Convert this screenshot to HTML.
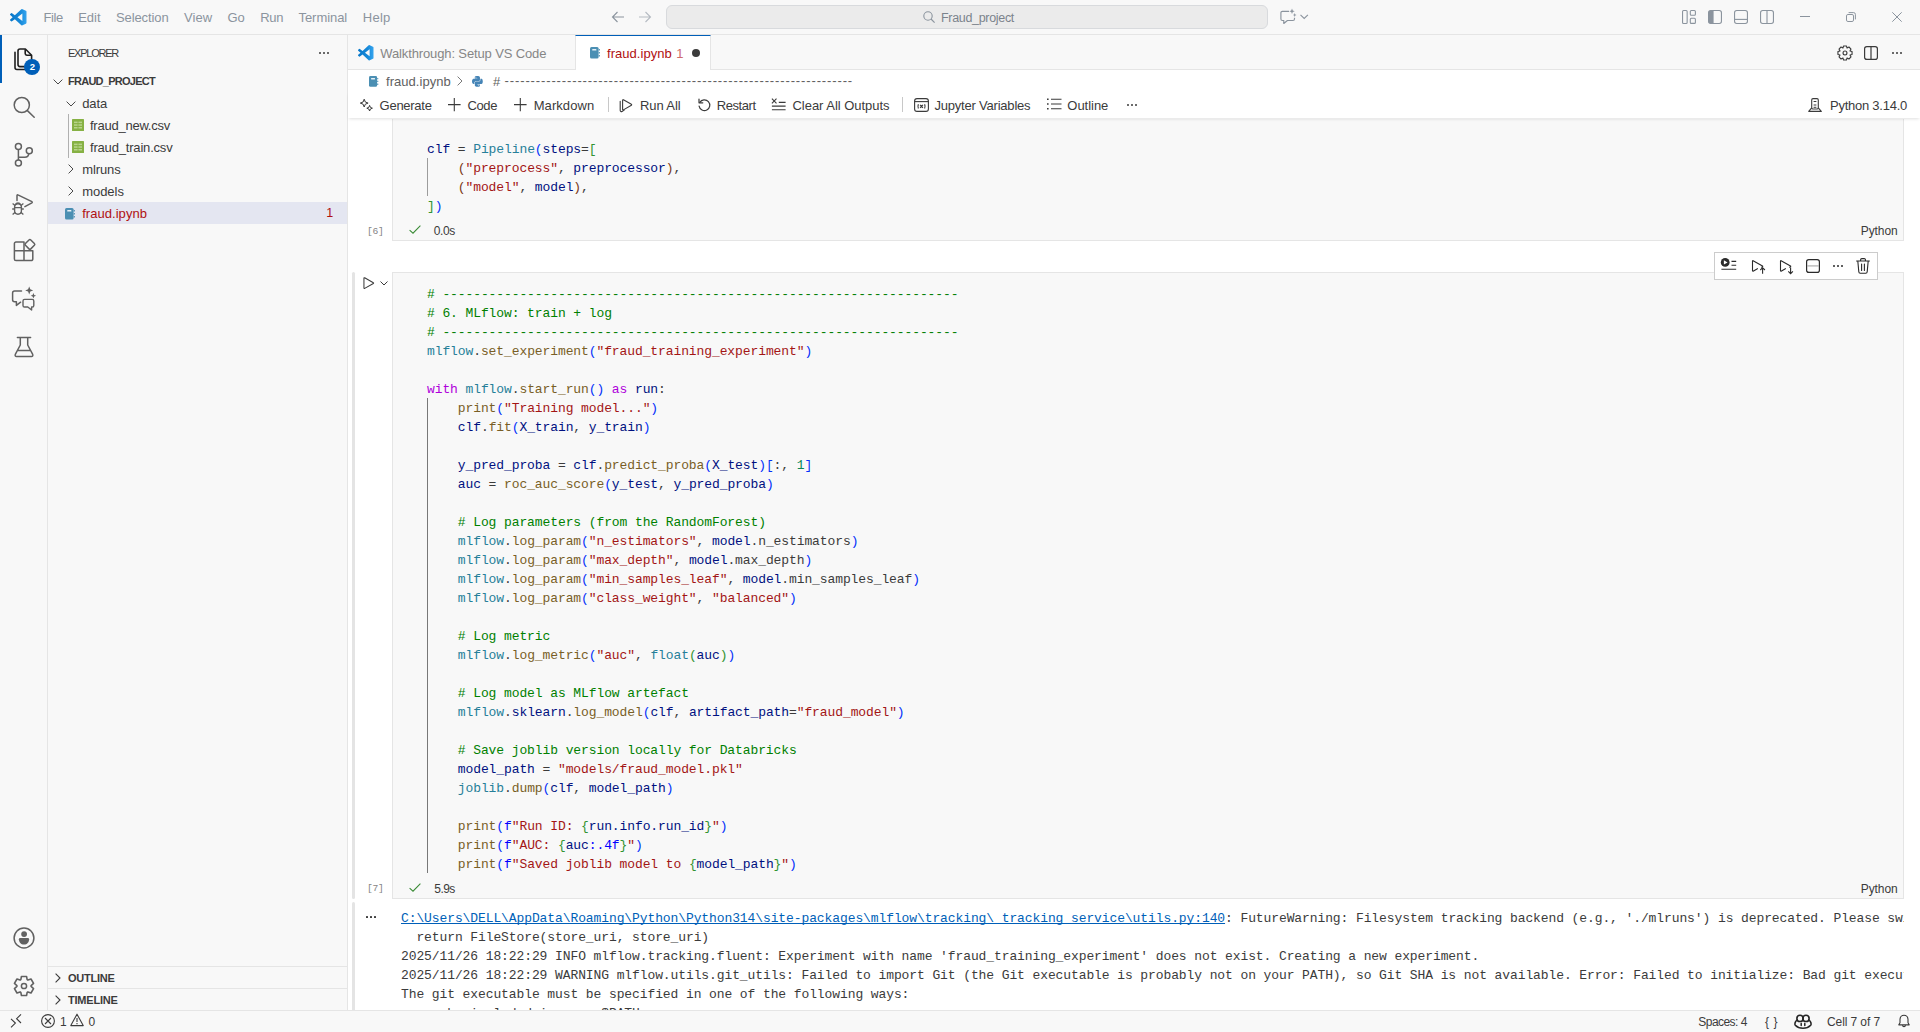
<!DOCTYPE html>
<html>
<head>
<meta charset="utf-8">
<title>fraud.ipynb - Fraud_project - Visual Studio Code</title>
<style>
*{box-sizing:border-box;margin:0;padding:0}
html,body{width:1920px;height:1032px;overflow:hidden;background:#f8f8f8}
body{font-family:"Liberation Sans",sans-serif;font-size:13px;color:#3b3b3b;position:relative}
.abs{position:absolute}
.t{position:absolute;white-space:pre;line-height:1}
svg{position:absolute;overflow:visible}
/* title bar */
#titlebar{left:0;top:0;width:1920px;height:35px;background:#f8f8f8;border-bottom:1px solid #e5e5e5}
.menu{color:#8b949e;font-size:12.4px;top:11px}
#cmd{left:666px;top:6px;width:602px;height:23px;background:#ececec;border:1px solid #d9d9d9;border-radius:6px}
/* activity bar */
#activity{left:0;top:35px;width:48px;height:975px;background:#f8f8f8;border-right:1px solid #e5e5e5}
/* sidebar */
#sidebar{left:48px;top:35px;width:300px;height:975px;background:#f8f8f8;border-right:1px solid #e5e5e5}
.row{font-size:12.4px;color:#3b3b3b}
/* editor */
#tabs{left:348px;top:35px;width:1572px;height:35px;background:#f8f8f8;border-bottom:1px solid #e5e5e5}
#tab2{left:575px;top:35px;width:136px;height:35px;background:#fff;border-top:1px solid #005fb8;border-left:1px solid #e5e5e5;border-right:1px solid #e5e5e5}
#editor{left:348px;top:70px;width:1572px;height:940px;background:#fff}
#nbtoolbar{left:348px;top:92px;width:1572px;height:26px;background:#fff;box-shadow:0 2px 3px -1px rgba(0,0,0,.13)}
.tb{font-size:12.4px;color:#3b3b3b;top:99px}
.cell{background:#f8f8f8;border:1px solid #e5e5e5}
.code{position:absolute;white-space:pre;font-family:"Liberation Mono",monospace;font-size:13px;letter-spacing:-0.1px;line-height:19px;color:#3b3b3b}
.out{position:absolute;white-space:pre;font-family:"Liberation Mono",monospace;font-size:13px;letter-spacing:-0.1px;line-height:19px;color:#3b3b3b}
.c{color:#008000}.s{color:#a31515}.k{color:#af00db}.f{color:#795e26}.v{color:#001080}.m{color:#267f99}.n{color:#098658}.b1{color:#0431fa}.b2{color:#319331}.kw{color:#0000ff}.b3{color:#7b3814}.lk{color:#005fb8;text-decoration:underline;text-decoration-skip-ink:none}
/* status bar */
#status{left:0;top:1010px;width:1920px;height:22px;background:#f8f8f8;border-top:1px solid #e5e5e5}
.st{font-size:11.6px;color:#3b3b3b;top:1016px}
</style>
</head>
<body>
<div id="titlebar" class="abs"></div>
<div id="activity" class="abs"></div>
<div id="sidebar" class="abs"></div>
<div id="tabs" class="abs"></div>
<div id="tab2" class="abs"></div>
<div id="editor" class="abs"></div>
<div id="status" class="abs"></div>
<svg style="left:10px;top:9px;" width="16.5" height="16.5" viewBox="0 0 24 24"><defs><linearGradient id="g1" x1="0" x2="1" y1="0" y2="0"><stop offset="0" stop-color="#0877c9"/><stop offset="0.6" stop-color="#1588d8"/><stop offset="1" stop-color="#35a4ee"/></linearGradient></defs><path fill="url(#g1)" d="M23.15 2.587L18.21.21a1.494 1.494 0 0 0-1.705.29l-9.46 8.63-4.12-3.128a.999.999 0 0 0-1.276.057L.327 7.261A1 1 0 0 0 .326 8.74L3.899 12 .326 15.26a1 1 0 0 0 .001 1.479L1.65 17.94a.999.999 0 0 0 1.276.057l4.12-3.128 9.46 8.63a1.492 1.492 0 0 0 1.704.29l4.942-2.377A1.5 1.5 0 0 0 24 20.06V3.939a1.5 1.5 0 0 0-.85-1.352zm-5.146 14.861L10.826 12l7.178-5.448v10.896z"/></svg>
<div class="t" style="left:43.5px;top:11.00px;font-size:13px;color:#8b949e;letter-spacing:-0.412px;">File</div>
<div class="t" style="left:78.2px;top:11.00px;font-size:13px;color:#8b949e;letter-spacing:-0.025px;">Edit</div>
<div class="t" style="left:116.0px;top:11.00px;font-size:13px;color:#8b949e;letter-spacing:-0.109px;">Selection</div>
<div class="t" style="left:184.0px;top:11.00px;font-size:13px;color:#8b949e;letter-spacing:0.039px;">View</div>
<div class="t" style="left:227.5px;top:11.00px;font-size:13px;color:#8b949e;letter-spacing:-0.021px;">Go</div>
<div class="t" style="left:260.2px;top:11.00px;font-size:13px;color:#8b949e;letter-spacing:-0.283px;">Run</div>
<div class="t" style="left:298.5px;top:11.00px;font-size:13px;color:#8b949e;letter-spacing:-0.053px;">Terminal</div>
<div class="t" style="left:362.8px;top:11.00px;font-size:13px;color:#8b949e;letter-spacing:0.241px;">Help</div>
<svg style="left:611px;top:10px;" width="14" height="14" viewBox="0 0 14 14"><path d="M13 7H1.5M6.5 2L1.5 7l5 5" fill="none" stroke="#8b949e" stroke-width="1.1"/></svg>
<svg style="left:638px;top:10px;" width="14" height="14" viewBox="0 0 14 14"><path d="M1 7h11.5M7.5 2l5 5-5 5" fill="none" stroke="#b5bbc2" stroke-width="1.1"/></svg>
<div class="abs" style="left:666px;top:5px;width:602px;height:24px;background:#ebebeb;border:1px solid #d8dadd;border-radius:6px;"></div>
<svg style="left:922px;top:10px;" width="14" height="14" viewBox="0 0 14 14"><circle cx="6" cy="6" r="4.2" fill="none" stroke="#8b949e" stroke-width="1.1"/><path d="M9 9l3.6 3.6" stroke="#8b949e" stroke-width="1.1"/></svg>
<div class="t" style="left:941.0px;top:12.12px;font-size:12.5px;color:#7b838c;letter-spacing:-0.317px;">Fraud_project</div>
<svg style="left:1280px;top:9px;" width="18" height="16" viewBox="0 0 18 16"><path d="M9 2.300H2.400a1.500 1.500 0 0 0-1.500 1.500V10a1.500 1.500 0 0 0 1.500 1.500H3.800V14.500L7.400 11.500H13a1.500 1.500 0 0 0 1.500-1.500V8.800" fill="none" stroke="#8b949e" stroke-width="1.150" stroke-linejoin="round"/><path d="M12 -0.40000000000000036L12.756 1.5439999999999996L14.7 2.3L12.756 3.056L12 5.0L11.244 3.056L9.3 2.3L11.244 1.5439999999999996z" fill="#8b949e"/><path d="M14.7 4.1L15.232 5.468L16.599999999999998 6L15.232 6.532L14.7 7.9L14.168 6.532L12.799999999999999 6L14.168 5.468z" fill="#8b949e"/></svg>
<svg style="left:1300.3px;top:14.1px;" width="9" height="6" viewBox="0 0 9 6"><path d="M0.500 0.800l3.700 3.700L7.900 0.800" fill="none" stroke="#8b949e" stroke-width="1.1"/></svg>
<svg style="left:1682px;top:10px;" width="14" height="14" viewBox="0 0 14 14"><rect x="0.55" y="0.55" width="4.6" height="12.9" rx="1" fill="none" stroke="#8b949e" stroke-width="1.1"/><rect x="8.3" y="0.55" width="5.1" height="4.7" rx="1" fill="none" stroke="#8b949e" stroke-width="1.1"/><rect x="8.3" y="8.3" width="5.1" height="5.1" rx="1" fill="none" stroke="#8b949e" stroke-width="1.1"/></svg>
<svg style="left:1708px;top:10px;" width="14" height="14" viewBox="0 0 14 14"><rect x="0.55" y="0.55" width="12.9" height="12.9" rx="2.2" fill="none" stroke="#8b949e" stroke-width="1.1"/><path d="M0.55 2.5a2 2 0 0 1 2-2H5.6v13H2.5a2 2 0 0 1-2-2z" fill="#8b949e"/></svg>
<svg style="left:1734px;top:10px;" width="14" height="14" viewBox="0 0 14 14"><rect x="0.55" y="0.55" width="12.9" height="12.9" rx="2.2" fill="none" stroke="#8b949e" stroke-width="1.1"/><path d="M0.5 9.4h13" stroke="#8b949e" stroke-width="1.1"/></svg>
<svg style="left:1760px;top:10px;" width="14" height="14" viewBox="0 0 14 14"><rect x="0.55" y="0.55" width="12.9" height="12.9" rx="2.2" fill="none" stroke="#8b949e" stroke-width="1.1"/><path d="M7 0.5v13" stroke="#8b949e" stroke-width="1.1"/></svg>
<div class="abs" style="left:1800px;top:16px;width:10px;height:1px;background:#8b949e;"></div>
<svg style="left:1846px;top:12px;" width="10" height="10" viewBox="0 0 10 10"><rect x="0.5" y="2.5" width="7" height="7" rx="1.4" fill="none" stroke="#8b949e" stroke-width="1"/><path d="M2.6 0.6H7.6a1.8 1.8 0 0 1 1.8 1.8V7.4" fill="none" stroke="#8b949e" stroke-width="1"/></svg>
<svg style="left:1892px;top:12px;" width="10" height="10" viewBox="0 0 10 10"><path d="M0.3 0.3l9.4 9.4M9.7 0.3L0.3 9.7" stroke="#8b949e" stroke-width="1"/></svg>

<div class="abs" style="left:0px;top:35px;width:2px;height:48px;background:#005fb8;"></div>
<svg style="left:12px;top:46px;" width="24" height="26" viewBox="0 0 24 26"><path d="M3 6.2v15.3a2 2 0 0 0 2 2h9.5" fill="none" stroke="#1f1f1f" stroke-width="1.6" stroke-linecap="round"/><path d="M8 3h5.400l6.200 6.200V18.6a2 2 0 0 1-2 2H8a2 2 0 0 1-2-2V5a2 2 0 0 1 2-2z" fill="none" stroke="#1f1f1f" stroke-width="1.6" stroke-linejoin="round"/><path d="M13.200 3.200v4.400a1.600 1.600 0 0 0 1.600 1.600h4.400" fill="none" stroke="#1f1f1f" stroke-width="1.6"/></svg>
<div class="abs" style="left:24px;top:59px;width:16px;height:16px;background:#005fb8;border-radius:8px;"></div>
<div class="t" style="left:29.7px;top:62.16px;font-size:9.5px;color:#fff;font-weight:bold;">2</div>
<svg style="left:12px;top:95px;" width="24" height="24" viewBox="0 0 24 24"><circle cx="9.8" cy="10" r="7.6" fill="none" stroke="#616161" stroke-width="1.5"/><path d="M15.4 15.6l6.8 6.6" stroke="#616161" stroke-width="1.5" stroke-linecap="round"/></svg>
<svg style="left:12px;top:142px;" width="24" height="26" viewBox="0 0 24 26"><circle cx="6.4" cy="4.5" r="3" fill="none" stroke="#616161" stroke-width="1.5"/><circle cx="6.4" cy="21" r="3" fill="none" stroke="#616161" stroke-width="1.5"/><circle cx="17.3" cy="8.8" r="3" fill="none" stroke="#616161" stroke-width="1.5"/><path d="M6.4 7.5V18M6.4 15.2h6.4a4 4 0 0 0 4-3.6" fill="none" stroke="#616161" stroke-width="1.5"/></svg>
<svg style="left:10px;top:192px;" width="26" height="26" viewBox="0 0 26 26"><path d="M7 8.6V3.4a.6.6 0 0 1 .9-.5l14 6.8a.6.6 0 0 1 0 1.1l-7 3.9" fill="none" stroke="#616161" stroke-width="1.5" stroke-linejoin="round" stroke-linecap="round"/><path d="M4.6 15.2a3.4 3.4 0 0 1 6.8 0v3.6a3.4 3.4 0 0 1-6.8 0z" fill="none" stroke="#616161" stroke-width="1.4"/><path d="M5.6 12.6a2.5 2.5 0 0 1 4.8 0M4.6 15.6h6.8M4.6 17H2.2M11.4 17h2.4M5 13.6L2.6 11.6M11 13.6l2.4-2M5.2 20.2l-2.6 2.4M10.8 20.2l2.6 2.4" fill="none" stroke="#616161" stroke-width="1.3"/></svg>
<svg style="left:12px;top:238px;" width="26" height="24" viewBox="0 0 26 24"><path d="M2.4 5.6a1.6 1.6 0 0 1 1.6-1.6H12v8.8h8.8v8.2a1.6 1.6 0 0 1-1.6 1.6H4a1.6 1.6 0 0 1-1.6-1.6zM2.4 12.8H12V22.4" fill="none" stroke="#616161" stroke-width="1.5" stroke-linejoin="round"/><rect x="14.1" y="2.6" width="7.6" height="7.6" rx="1.3" transform="rotate(45 17.9 6.4)" fill="none" stroke="#616161" stroke-width="1.5"/></svg>
<svg style="left:10px;top:286px;" width="28" height="26" viewBox="0 0 28 26"><path d="M11.5 5H4.6A2 2 0 0 0 2.6 7v6.8a2 2 0 0 0 2 2H6.4v3.6l4.2-3.2" fill="none" stroke="#616161" stroke-width="1.5" stroke-linejoin="round" stroke-linecap="round"/><path d="M14.6 13.4h7.6a1.6 1.6 0 0 1 1.6 1.6v4.4a1.6 1.6 0 0 1-1.6 1.6H21.6v3l-3.8-3h-3.2a1.6 1.6 0 0 1-1.6-1.6V15a1.6 1.6 0 0 1 1.6-1.600z" fill="none" stroke="#616161" stroke-width="1.4" stroke-linejoin="round"/><path d="M19.2 0.4l1.1 2.9 2.9 1.1-2.9 1.1-1.1 2.9-1.1-2.900-2.9-1.1 2.9-1.1z" fill="#616161"/><path d="M23.4 7l.8 1.900 1.900.8-1.900.8-.8 1.900-.8-1.900-1.900-.8 1.900-.8z" fill="#616161"/></svg>
<svg style="left:12px;top:334px;" width="24" height="26" viewBox="0 0 24 26"><path d="M5.4 3.4h13.200M8.300 3.400V11.000L3.300 20.400a1.400 1.400 0 0 0 1.200 2.100H19.500a1.400 1.400 0 0 0 1.200-2.100L15.700 11.000V3.400M5.700 16.400h12.600" fill="none" stroke="#616161" stroke-width="1.5" stroke-linejoin="round" stroke-linecap="round"/></svg>
<svg style="left:12px;top:926px;" width="24" height="24" viewBox="0 0 24 24"><circle cx="12" cy="12" r="9.900" fill="none" stroke="#616161" stroke-width="1.500"/><circle cx="12.100" cy="8.100" r="2.900" fill="#616161"/><path d="M8.100 12h7.800a1.200 1.200 0 0 1 1.200 1.200c0 3-2 5.300-5.100 5.300S6.900 16.200 6.900 13.200a1.200 1.200 0 0 1 1.200-1.200z" fill="#616161"/></svg>
<svg style="left:12px;top:974px;" width="24" height="24" viewBox="0 0 24 24"><path d="M9.45 2.43L14.55 2.43L15.15 5.64L15.93 6.09L19.01 5.01L21.56 9.42L19.09 11.55L19.09 12.45L21.56 14.58L19.01 18.99L15.93 17.91L15.15 18.36L14.55 21.57L9.45 21.57L8.85 18.36L8.07 17.91L4.99 18.99L2.44 14.58L4.91 12.45L4.91 11.55L2.44 9.42L4.99 5.01L8.07 6.09L8.85 5.64z" fill="none" stroke="#616161" stroke-width="1.600" stroke-linejoin="round"/><circle cx="12" cy="12" r="2.600" fill="none" stroke="#616161" stroke-width="1.500"/></svg>

<div class="t" style="left:68.0px;top:48.19px;font-size:11px;color:#3b3b3b;letter-spacing:-1.239px;">EXPLORER</div>
<div class="abs" style="left:319px;top:52px;width:2px;height:2px;background:#3b3b3b;border-radius:1px;"></div>
<div class="abs" style="left:323px;top:52px;width:2px;height:2px;background:#3b3b3b;border-radius:1px;"></div>
<div class="abs" style="left:327px;top:52px;width:2px;height:2px;background:#3b3b3b;border-radius:1px;"></div>
<svg style="left:53px;top:79px;" width="10" height="6" viewBox="0 0 10 6"><path d="M0.600 0.600l4.400 4.400 4.400-4.400" fill="none" stroke="#4a4a4a" stroke-width="1.0"/></svg>
<div class="t" style="left:68.0px;top:76.29px;font-size:11px;color:#3b3b3b;letter-spacing:-0.736px;font-weight:bold;">FRAUD_PROJECT</div>
<div class="abs" style="left:48px;top:202px;width:299px;height:22px;background:#e4e6f1;"></div>
<svg style="left:66px;top:100.5px;" width="10" height="6" viewBox="0 0 10 6"><path d="M0.600 0.600l4.400 4.400 4.400-4.400" fill="none" stroke="#4a4a4a" stroke-width="1.0"/></svg>
<div class="t" style="left:82.2px;top:96.70px;font-size:13px;color:#3b3b3b;letter-spacing:-0.076px;">data</div>
<div class="abs" style="left:68px;top:114px;width:1px;height:44px;background:#b0b0b0;"></div>
<svg style="left:72px;top:119.3px;" width="12" height="12" viewBox="0 0 12 12"><rect x="0" y="0" width="12" height="12" rx=".6" fill="#86b144"/><rect x="2" y="2.6" width="3.600" height="1.500" fill="#b9d48d"/><rect x="6.400" y="2.6" width="3.600" height="1.500" fill="#b9d48d"/><rect x="2" y="5.3" width="3.600" height="1.500" fill="#b9d48d"/><rect x="6.400" y="5.3" width="3.600" height="1.500" fill="#b9d48d"/><rect x="2" y="8.0" width="3.600" height="1.500" fill="#b9d48d"/><rect x="6.400" y="8.0" width="3.600" height="1.500" fill="#b9d48d"/></svg>
<div class="t" style="left:90.0px;top:118.70px;font-size:13px;color:#3b3b3b;letter-spacing:-0.239px;">fraud_new.csv</div>
<svg style="left:72px;top:141.3px;" width="12" height="12" viewBox="0 0 12 12"><rect x="0" y="0" width="12" height="12" rx=".6" fill="#86b144"/><rect x="2" y="2.6" width="3.600" height="1.500" fill="#b9d48d"/><rect x="6.400" y="2.6" width="3.600" height="1.500" fill="#b9d48d"/><rect x="2" y="5.3" width="3.600" height="1.500" fill="#b9d48d"/><rect x="6.400" y="5.3" width="3.600" height="1.500" fill="#b9d48d"/><rect x="2" y="8.0" width="3.600" height="1.500" fill="#b9d48d"/><rect x="6.400" y="8.0" width="3.600" height="1.500" fill="#b9d48d"/></svg>
<div class="t" style="left:90.0px;top:140.70px;font-size:13px;color:#3b3b3b;letter-spacing:-0.184px;">fraud_train.csv</div>
<svg style="left:68px;top:164px;" width="6" height="10" viewBox="0 0 6 10"><path d="M0.600 0.600l4.400 4.400-4.400 4.400" fill="none" stroke="#4a4a4a" stroke-width="1.0"/></svg>
<div class="t" style="left:82.2px;top:162.70px;font-size:13px;color:#3b3b3b;letter-spacing:-0.085px;">mlruns</div>
<svg style="left:68px;top:186px;" width="6" height="10" viewBox="0 0 6 10"><path d="M0.600 0.600l4.400 4.400-4.400 4.400" fill="none" stroke="#4a4a4a" stroke-width="1.0"/></svg>
<div class="t" style="left:82.2px;top:184.70px;font-size:13px;color:#3b3b3b;letter-spacing:-0.035px;">models</div>
<svg style="left:65px;top:207.5px;" width="10.0" height="11.5" viewBox="0 0 10 11.5"><rect x="0" y="0" width="8.600" height="11.500" rx="1.500" fill="#4b8fb3"/><rect x="2.200" y="2" width="4.200" height="1.600" rx=".4" fill="#e6f0f6"/><path d="M9.300 2v1.500M9.300 5v1.500M9.300 8v1.500" stroke="#4b8fb3" stroke-width="1.100"/></svg>
<div class="t" style="left:82.2px;top:206.70px;font-size:13px;color:#b01011;letter-spacing:0.043px;">fraud.ipynb</div>
<div class="t" style="left:326.2px;top:207.02px;font-size:12.5px;color:#b01011;">1</div>
<div class="abs" style="left:48px;top:966px;width:299px;height:1px;background:#e5e5e5;"></div>
<div class="abs" style="left:48px;top:988px;width:299px;height:1px;background:#e5e5e5;"></div>
<svg style="left:54.8px;top:973px;" width="6" height="10" viewBox="0 0 6 10"><path d="M0.600 0.600l4.400 4.400-4.400 4.400" fill="none" stroke="#3b3b3b" stroke-width="1.1"/></svg>
<div class="t" style="left:68.0px;top:972.69px;font-size:11px;color:#3b3b3b;letter-spacing:-0.254px;font-weight:bold;">OUTLINE</div>
<svg style="left:54.8px;top:995px;" width="6" height="10" viewBox="0 0 6 10"><path d="M0.600 0.600l4.400 4.400-4.400 4.400" fill="none" stroke="#3b3b3b" stroke-width="1.1"/></svg>
<div class="t" style="left:68.0px;top:994.89px;font-size:11px;color:#3b3b3b;letter-spacing:-0.204px;font-weight:bold;">TIMELINE</div>

<div class="abs" style="left:392px;top:119px;width:1512px;height:122px;background:#f8f8f8;border:1px solid #e5e5e5;border-top:none;"></div>
<div class="abs" style="left:427px;top:158px;width:1px;height:38px;background:#9c9c9c;"></div>
<div class="code" style="left:427px;top:140.10px"><span class="v">clf</span> = <span class="m">Pipeline</span><span class="b1">(</span><span class="v">steps</span>=<span class="b2">[</span></div>
<div class="code" style="left:427px;top:159.10px">    <span class="b3">(</span><span class="s">&quot;preprocess&quot;</span>, <span class="v">preprocessor</span><span class="b3">)</span>,</div>
<div class="code" style="left:427px;top:178.10px">    <span class="b3">(</span><span class="s">&quot;model&quot;</span>, <span class="v">model</span><span class="b3">)</span>,</div>
<div class="code" style="left:427px;top:197.10px"><span class="b2">]</span><span class="b1">)</span></div>
<div class="t" style="left:367px;top:226.79px;font-family:'Liberation Mono',monospace;font-size:9.7px;color:#858585;letter-spacing:-0.350px">[6]</div>
<svg style="left:409px;top:225.3px;" width="12" height="9" viewBox="0 0 12 9"><path d="M0.600 5.200l3.400 3L11.400 0.600" fill="none" stroke="#388a34" stroke-width="1.050"/></svg>
<div class="t" style="left:433.8px;top:225.14px;font-size:12px;color:#3b3b3b;letter-spacing:-0.420px;">0.0s</div>
<div class="t" style="left:1860.7px;top:225.34px;font-size:12px;color:#3b3b3b;letter-spacing:-0.060px;">Python</div>
<div class="abs" style="left:352px;top:272px;width:3px;height:627px;background:#e4e4e4;border-radius:1.500px;"></div>
<div class="abs" style="left:352px;top:902px;width:3px;height:108px;background:#e4e4e4;border-radius:1.500px 1.500px 0 0;"></div>
<div class="abs" style="left:392px;top:272px;width:1512px;height:627px;background:#f8f8f8;border:1px solid #e5e5e5;"></div>
<div class="abs" style="left:427px;top:398px;width:1px;height:475px;background:#787878;"></div>
<div class="abs" style="left:1714px;top:252px;width:164px;height:28px;background:#fff;border:1px solid #cccccc;"></div>
<svg style="left:1720px;top:257px;" width="18" height="14" viewBox="0 0 18 14"><circle cx="5.200" cy="5.400" r="4.400" fill="#2b2b2b"/><path d="M3.900 3.200v4.400l3.600-2.200z" fill="#fff"/><path d="M11.500 4.400h4.700M11.500 8.200h4.700M1.400 12.300h14.800" stroke="#2b2b2b" stroke-width="1.100"/></svg>
<svg style="left:1751px;top:259px;" width="15" height="16" viewBox="0 0 15 16"><path d="M1.500 2v9.800a.4.400 0 0 0 .600.350l4.300-2.500M1.500 2a.4.400 0 0 1 .600-.350l9.400 5.400a.4.400 0 0 1 0 .700l-.800.450" fill="none" stroke="#2b2b2b" stroke-width="1.100" stroke-linecap="round" stroke-linejoin="round"/><path d="M11.600 14.800V8.800M9.300 11l2.300-2.300 2.300 2.300" fill="none" stroke="#2b2b2b" stroke-width="1.100"/></svg>
<svg style="left:1779px;top:259px;" width="15" height="16" viewBox="0 0 15 16"><path d="M1.500 2v9.800a.4.400 0 0 0 .600.350l4.300-2.500M1.500 2a.4.400 0 0 1 .600-.350l9.400 5.400a.4.400 0 0 1 0 .700l-.800.450" fill="none" stroke="#2b2b2b" stroke-width="1.100" stroke-linecap="round" stroke-linejoin="round"/><path d="M11.600 8.600v6M9.300 12.400l2.300 2.300 2.300-2.300" fill="none" stroke="#2b2b2b" stroke-width="1.100"/></svg>
<svg style="left:1806px;top:259px;" width="14" height="14" viewBox="0 0 14 14"><rect x="0.600" y="0.600" width="12.800" height="12.800" rx="2.200" fill="none" stroke="#2b2b2b" stroke-width="1.200"/><path d="M1 6.900h12" stroke="#b5b5b5" stroke-width="1.300"/></svg>
<div class="abs" style="left:1833px;top:264.8px;width:2px;height:2px;background:#2b2b2b;border-radius:1px;"></div>
<div class="abs" style="left:1837.2px;top:264.8px;width:2px;height:2px;background:#2b2b2b;border-radius:1px;"></div>
<div class="abs" style="left:1841.4px;top:264.8px;width:2px;height:2px;background:#2b2b2b;border-radius:1px;"></div>
<svg style="left:1856px;top:257.5px;" width="14" height="16" viewBox="0 0 14 16"><path d="M0.600 3h12.800M4.600 3V1.800a1.200 1.200 0 0 1 1.200-1.200h2.400a1.200 1.200 0 0 1 1.200 1.200V3M1.800 3l1 10.800a1.500 1.500 0 0 0 1.500 1.400h5.400a1.500 1.500 0 0 0 1.500-1.400L12.200 3M5.600 6v6.400M8.400 6v6.400" fill="none" stroke="#2b2b2b" stroke-width="1.100" stroke-linecap="round"/></svg>
<svg style="left:362.56px;top:276.7px;" width="11.3" height="12.3" viewBox="0 0 12 13"><path d="M1 1.300v10.400a.5.500 0 0 0 .8.400l9.200-5.200a.5.500 0 0 0 0-.900L1.800.800a.5.500 0 0 0-.8.500z" fill="none" stroke="#3b3b3b" stroke-width="1.100" stroke-linejoin="round"/></svg>
<svg style="left:379.5px;top:281px;" width="8" height="5" viewBox="0 0 8 5"><path d="M0.500 0.500l3.500 3.500 3.500-3.500" fill="none" stroke="#3b3b3b" stroke-width="1"/></svg>
<div class="code" style="left:427px;top:285.10px"><span class="c"># -------------------------------------------------------------------</span></div>
<div class="code" style="left:427px;top:304.10px"><span class="c"># 6. MLflow: train + log</span></div>
<div class="code" style="left:427px;top:323.10px"><span class="c"># -------------------------------------------------------------------</span></div>
<div class="code" style="left:427px;top:342.10px"><span class="m">mlflow</span>.<span class="f">set_experiment</span><span class="b1">(</span><span class="s">&quot;fraud_training_experiment&quot;</span><span class="b1">)</span></div>
<div class="code" style="left:427px;top:380.10px"><span class="k">with</span> <span class="m">mlflow</span>.<span class="f">start_run</span><span class="b1">()</span> <span class="k">as</span> <span class="v">run</span>:</div>
<div class="code" style="left:427px;top:399.10px">    <span class="f">print</span><span class="b1">(</span><span class="s">&quot;Training model...&quot;</span><span class="b1">)</span></div>
<div class="code" style="left:427px;top:418.10px">    <span class="v">clf</span>.<span class="f">fit</span><span class="b1">(</span><span class="v">X_train</span>, <span class="v">y_train</span><span class="b1">)</span></div>
<div class="code" style="left:427px;top:456.10px">    <span class="v">y_pred_proba</span> = <span class="v">clf</span>.<span class="f">predict_proba</span><span class="b1">(</span><span class="v">X_test</span><span class="b1">)</span><span class="b1">[</span>:, <span class="n">1</span><span class="b1">]</span></div>
<div class="code" style="left:427px;top:475.10px">    <span class="v">auc</span> = <span class="f">roc_auc_score</span><span class="b1">(</span><span class="v">y_test</span>, <span class="v">y_pred_proba</span><span class="b1">)</span></div>
<div class="code" style="left:427px;top:513.10px">    <span class="c"># Log parameters (from the RandomForest)</span></div>
<div class="code" style="left:427px;top:532.10px">    <span class="m">mlflow</span>.<span class="f">log_param</span><span class="b1">(</span><span class="s">&quot;n_estimators&quot;</span>, <span class="v">model</span>.n_estimators<span class="b1">)</span></div>
<div class="code" style="left:427px;top:551.10px">    <span class="m">mlflow</span>.<span class="f">log_param</span><span class="b1">(</span><span class="s">&quot;max_depth&quot;</span>, <span class="v">model</span>.max_depth<span class="b1">)</span></div>
<div class="code" style="left:427px;top:570.10px">    <span class="m">mlflow</span>.<span class="f">log_param</span><span class="b1">(</span><span class="s">&quot;min_samples_leaf&quot;</span>, <span class="v">model</span>.min_samples_leaf<span class="b1">)</span></div>
<div class="code" style="left:427px;top:589.10px">    <span class="m">mlflow</span>.<span class="f">log_param</span><span class="b1">(</span><span class="s">&quot;class_weight&quot;</span>, <span class="s">&quot;balanced&quot;</span><span class="b1">)</span></div>
<div class="code" style="left:427px;top:627.10px">    <span class="c"># Log metric</span></div>
<div class="code" style="left:427px;top:646.10px">    <span class="m">mlflow</span>.<span class="f">log_metric</span><span class="b1">(</span><span class="s">&quot;auc&quot;</span>, <span class="m">float</span><span class="b2">(</span><span class="v">auc</span><span class="b2">)</span><span class="b1">)</span></div>
<div class="code" style="left:427px;top:684.10px">    <span class="c"># Log model as MLflow artefact</span></div>
<div class="code" style="left:427px;top:703.10px">    <span class="m">mlflow</span>.<span class="v">sklearn</span>.<span class="f">log_model</span><span class="b1">(</span><span class="v">clf</span>, <span class="v">artifact_path</span>=<span class="s">&quot;fraud_model&quot;</span><span class="b1">)</span></div>
<div class="code" style="left:427px;top:741.10px">    <span class="c"># Save joblib version locally for Databricks</span></div>
<div class="code" style="left:427px;top:760.10px">    <span class="v">model_path</span> = <span class="s">&quot;models/fraud_model.pkl&quot;</span></div>
<div class="code" style="left:427px;top:779.10px">    <span class="m">joblib</span>.<span class="f">dump</span><span class="b1">(</span><span class="v">clf</span>, <span class="v">model_path</span><span class="b1">)</span></div>
<div class="code" style="left:427px;top:817.10px">    <span class="f">print</span><span class="b1">(</span><span class="kw">f</span><span class="s">&quot;Run ID: </span><span class="b2">{</span><span class="v">run.info.run_id</span><span class="b2">}</span><span class="s">&quot;</span><span class="b1">)</span></div>
<div class="code" style="left:427px;top:836.10px">    <span class="f">print</span><span class="b1">(</span><span class="kw">f</span><span class="s">&quot;AUC: </span><span class="b2">{</span><span class="v">auc</span><span class="kw">:.4f</span><span class="b2">}</span><span class="s">&quot;</span><span class="b1">)</span></div>
<div class="code" style="left:427px;top:855.10px">    <span class="f">print</span><span class="b1">(</span><span class="kw">f</span><span class="s">&quot;Saved joblib model to </span><span class="b2">{</span><span class="v">model_path</span><span class="b2">}</span><span class="s">&quot;</span><span class="b1">)</span></div>
<div class="t" style="left:367px;top:883.59px;font-family:'Liberation Mono',monospace;font-size:9.7px;color:#858585;letter-spacing:-0.350px">[7]</div>
<svg style="left:409px;top:883.3px;" width="12" height="9" viewBox="0 0 12 9"><path d="M0.600 5.200l3.400 3L11.400 0.600" fill="none" stroke="#388a34" stroke-width="1.050"/></svg>
<div class="t" style="left:434.3px;top:882.84px;font-size:12px;color:#3b3b3b;letter-spacing:-0.545px;">5.9s</div>
<div class="t" style="left:1860.7px;top:882.84px;font-size:12px;color:#3b3b3b;letter-spacing:-0.060px;">Python</div>
<div class="abs" style="left:366px;top:916px;width:2px;height:2px;background:#3b3b3b;border-radius:.5px;"></div>
<div class="abs" style="left:370px;top:916px;width:2px;height:2px;background:#3b3b3b;border-radius:.5px;"></div>
<div class="abs" style="left:374px;top:916px;width:2px;height:2px;background:#3b3b3b;border-radius:.5px;"></div>
<div class="abs" style="left:401px;top:903px;width:1503px;height:107px;overflow:hidden"><div class="out" style="left:0;top:6.10px"><span class="lk">C:\Users\DELL\AppData\Roaming\Python\Python314\site-packages\mlflow\tracking\_tracking_service\utils.py:140</span>: FutureWarning: Filesystem tracking backend (e.g., &#x27;./mlruns&#x27;) is deprecated. Please switch to a database backend</div><div class="out" style="left:0;top:25.10px">  return FileStore(store_uri, store_uri)</div><div class="out" style="left:0;top:44.10px">2025/11/26 18:22:29 INFO mlflow.tracking.fluent: Experiment with name &#x27;fraud_training_experiment&#x27; does not exist. Creating a new experiment.</div><div class="out" style="left:0;top:63.10px">2025/11/26 18:22:29 WARNING mlflow.utils.git_utils: Failed to import Git (the Git executable is probably not on your PATH), so Git SHA is not available. Error: Failed to initialize: Bad git executable.</div><div class="out" style="left:0;top:82.10px">The git executable must be specified in one of the following ways:</div><div class="out" style="left:0;top:101.10px">    - be included in your $PATH</div></div>

<div id="nbtoolbar" class="abs"></div>
<svg style="left:358px;top:45px;" width="15.5" height="15.5" viewBox="0 0 24 24"><defs><linearGradient id="g2" x1="0" x2="1" y1="0" y2="0"><stop offset="0" stop-color="#0877c9"/><stop offset="0.6" stop-color="#1588d8"/><stop offset="1" stop-color="#35a4ee"/></linearGradient></defs><path fill="url(#g2)" d="M23.15 2.587L18.21.21a1.494 1.494 0 0 0-1.705.29l-9.46 8.63-4.12-3.128a.999.999 0 0 0-1.276.057L.327 7.261A1 1 0 0 0 .326 8.74L3.899 12 .326 15.26a1 1 0 0 0 .001 1.479L1.65 17.94a.999.999 0 0 0 1.276.057l4.12-3.128 9.46 8.63a1.492 1.492 0 0 0 1.704.29l4.942-2.377A1.5 1.5 0 0 0 24 20.06V3.939a1.5 1.5 0 0 0-.85-1.352zm-5.146 14.861L10.826 12l7.178-5.448v10.896z"/></svg>
<div class="t" style="left:380.3px;top:46.90px;font-size:13px;color:#868686;letter-spacing:-0.128px;">Walkthrough: Setup VS Code</div>
<svg style="left:589.7px;top:46.5px;" width="10.0" height="11.5" viewBox="0 0 10 11.5"><rect x="0" y="0" width="8.600" height="11.500" rx="1.500" fill="#4b8fb3"/><rect x="2.200" y="2" width="4.200" height="1.600" rx=".4" fill="#e6f0f6"/><path d="M9.300 2v1.500M9.300 5v1.500M9.300 8v1.500" stroke="#4b8fb3" stroke-width="1.100"/></svg>
<div class="t" style="left:607.0px;top:46.90px;font-size:13px;color:#b01011;letter-spacing:0.043px;">fraud.ipynb</div>
<div class="t" style="left:676.3px;top:46.90px;font-size:13px;color:#cf6b6b;">1</div>
<div class="abs" style="left:692px;top:49px;width:8px;height:8px;background:#3b3b3b;border-radius:4px;"></div>
<svg style="left:1836px;top:44px;" width="18" height="18" viewBox="0 0 24 24"><path d="M21.41 10.09L21.41 13.91L18.66 14.74L18.64 14.77L20.00 17.30L17.30 20.00L14.77 18.64L14.74 18.66L13.91 21.41L10.09 21.41L9.26 18.66L9.23 18.64L6.70 20.00L4.00 17.30L5.36 14.77L5.34 14.74L2.59 13.91L2.59 10.09L5.34 9.26L5.36 9.23L4.00 6.70L6.70 4.00L9.23 5.36L9.26 5.34L10.09 2.59L13.91 2.59L14.74 5.34L14.77 5.36L17.30 4.00L20.00 6.70L18.64 9.23L18.66 9.26z" fill="none" stroke="#3b3b3b" stroke-width="1.500" stroke-linejoin="round"/><circle cx="12" cy="12" r="2.600" fill="none" stroke="#3b3b3b" stroke-width="1.500"/></svg>
<svg style="left:1864px;top:46px;" width="14" height="14" viewBox="0 0 14 14"><rect x="0.600" y="0.600" width="12.800" height="12.800" rx="2.200" fill="none" stroke="#3b3b3b" stroke-width="1.200"/><path d="M7 0.600v12.800" stroke="#3b3b3b" stroke-width="1.200"/></svg>
<div class="abs" style="left:1891.8px;top:52px;width:2px;height:2px;background:#3b3b3b;border-radius:1px;"></div>
<div class="abs" style="left:1895.9px;top:52px;width:2px;height:2px;background:#3b3b3b;border-radius:1px;"></div>
<div class="abs" style="left:1900px;top:52px;width:2px;height:2px;background:#3b3b3b;border-radius:1px;"></div>
<svg style="left:369px;top:76.3px;" width="9.391304347826088" height="10.8" viewBox="0 0 10 11.5"><rect x="0" y="0" width="8.600" height="11.500" rx="1.500" fill="#4b8fb3"/><rect x="2.200" y="2" width="4.200" height="1.600" rx=".4" fill="#e6f0f6"/><path d="M9.300 2v1.500M9.300 5v1.500M9.300 8v1.500" stroke="#4b8fb3" stroke-width="1.100"/></svg>
<div class="t" style="left:386.0px;top:74.70px;font-size:13px;color:#616161;letter-spacing:0.043px;">fraud.ipynb</div>
<svg style="left:456.8px;top:76.3px;" width="6" height="10" viewBox="0 0 6 10"><path d="M0.600 0.600l4.400 4.400-4.400 4.400" fill="none" stroke="#7a7a7a" stroke-width="1"/></svg>
<svg style="left:472.3px;top:76px;" width="10.8" height="10.8" viewBox="0 0 24 24"><path fill="#4584b6" d="M11.900 0C5.800 0 6.200 2.600 6.200 2.600v2.700h5.800v.8H3.900S0 5.700 0 11.900s3.400 5.900 3.400 5.900h2v-2.800s-.1-3.400 3.300-3.400h5.800s3.200.1 3.200-3.100V3.200S18.200 0 11.900 0zM8.700 1.800a1 1 0 1 1 0 2.100 1 1 0 0 1 0-2.100z"/><path fill="#4584b6" d="M12.100 24c6.100 0 5.700-2.600 5.700-2.600v-2.700h-5.800v-.8h8.100s3.900.4 3.900-5.800-3.400-5.900-3.400-5.900h-2v2.800s.1 3.400-3.300 3.400H9.500s-3.200-.1-3.200 3.100v5.300S5.800 24 12.100 24zm3.200-1.800a1 1 0 1 1 0-2.100 1 1 0 0 1 0 2.100z"/></svg>
<div class="t" style="left:493.0px;top:74.70px;font-size:13px;color:#616161;">#</div>
<div class="t" style="left:504.6px;top:74.10px;font-size:13px;color:#616161;letter-spacing:0.872px;">-------------------------------------------------------------------</div>
<svg style="left:359.5px;top:98px;" width="13" height="14" viewBox="0 0 13 14"><path d="M4.200 1.200l1.100 2.800 2.800 1.100-2.800 1.100-1.100 2.800-1.100-2.800L.300 5.100l2.800-1.100z" fill="none" stroke="#3b3b3b" stroke-width="1"/><path d="M9.600 7.400l.8 2 2 .8-2 .8-.8 2-.8-2-2-.8 2-.8z" fill="none" stroke="#3b3b3b" stroke-width="1"/></svg>
<div class="t" style="left:379.6px;top:99.20px;font-size:13px;color:#3b3b3b;letter-spacing:-0.275px;">Generate</div>
<svg style="left:447.5px;top:97.7px;" width="12.6" height="13.2" viewBox="0 0 12.600 13.200"><path d="M6.300 0v13.200M0 6.600h12.600" stroke="#3b3b3b" stroke-width="1.100"/></svg>
<div class="t" style="left:467.5px;top:99.20px;font-size:13px;color:#3b3b3b;letter-spacing:-0.395px;">Code</div>
<svg style="left:513.5px;top:97.7px;" width="12.6" height="13.2" viewBox="0 0 12.600 13.200"><path d="M6.300 0v13.200M0 6.600h12.600" stroke="#3b3b3b" stroke-width="1.100"/></svg>
<div class="t" style="left:533.7px;top:99.20px;font-size:13px;color:#3b3b3b;letter-spacing:0.066px;">Markdown</div>
<div class="abs" style="left:608px;top:97px;width:1px;height:15px;background:#c8c8c8;"></div>
<svg style="left:619px;top:98px;" width="14" height="14.5" viewBox="0 0 14 14.500"><path d="M3.600 2.100v9.400a.5.500 0 0 0 .8.400l8-4.700a.5.500 0 0 0 0-.900l-8-4.600a.5.500 0 0 0-.8.400z" fill="none" stroke="#3b3b3b" stroke-width="1.100" stroke-linejoin="round"/><path d="M1.200 3.200v9.200a1.200 1.200 0 0 0 1.800 1l2.200-1.300" fill="none" stroke="#3b3b3b" stroke-width="1.100" stroke-linecap="round"/></svg>
<div class="t" style="left:640.0px;top:99.20px;font-size:13px;color:#3b3b3b;letter-spacing:-0.099px;">Run All</div>
<svg style="left:698px;top:97.6px;" width="13" height="13.5" viewBox="0 0 13 13.500"><path d="M1.800 4.400A5.400 5.400 0 1 1 1.100 8.200" fill="none" stroke="#3b3b3b" stroke-width="1.200" stroke-linecap="round"/><path d="M1 1v3.800h3.800" fill="none" stroke="#3b3b3b" stroke-width="1.200" stroke-linecap="round" stroke-linejoin="round"/></svg>
<div class="t" style="left:716.8px;top:99.20px;font-size:13px;color:#3b3b3b;letter-spacing:-0.443px;">Restart</div>
<svg style="left:770.5px;top:97.5px;" width="16" height="13" viewBox="0 0 16 13"><path d="M0.900 0.700l4.600 4.600M5.500 0.700l-4.600 4.600M7.800 4.400h6.800M0.900 8.100h13.700M0.900 11.700h13.700" fill="none" stroke="#3b3b3b" stroke-width="1.100"/></svg>
<div class="t" style="left:792.5px;top:99.20px;font-size:13px;color:#3b3b3b;letter-spacing:-0.032px;">Clear All Outputs</div>
<div class="abs" style="left:902px;top:97px;width:1px;height:15px;background:#c8c8c8;"></div>
<svg style="left:914px;top:98px;" width="15" height="14" viewBox="0 0 15 14"><rect x="0.600" y="0.600" width="13.800" height="12.800" rx="2.400" fill="none" stroke="#3b3b3b" stroke-width="1.100"/><path d="M0.600 3.600h13.800" stroke="#3b3b3b" stroke-width="1.100"/><path d="M4.400 6.200q-1 2.200 0 4.400M10.600 6.200q1 2.200 0 4.400M6.100 6.900l2.800 3M8.900 6.900l-2.800 3" fill="none" stroke="#3b3b3b" stroke-width="1.150"/></svg>
<div class="t" style="left:934.4px;top:99.20px;font-size:13px;color:#3b3b3b;letter-spacing:-0.205px;">Jupyter Variables</div>
<svg style="left:1046.5px;top:98.2px;" width="14.5" height="12" viewBox="0 0 14.500 12"><path d="M4 1.200h10.500M4 6h10.500M4 10.800h10.500" stroke="#3b3b3b" stroke-width="1.100"/><rect x="0" y="0.500" width="1.600" height="1.500" fill="#3b3b3b"/><rect x="0" y="5.250" width="1.600" height="1.500" fill="#3b3b3b"/><rect x="0" y="10" width="1.600" height="1.500" fill="#3b3b3b"/></svg>
<div class="t" style="left:1067.3px;top:99.20px;font-size:13px;color:#3b3b3b;letter-spacing:-0.027px;">Outline</div>
<div class="abs" style="left:1126.5px;top:103.9px;width:2px;height:2px;background:#3b3b3b;border-radius:1px;"></div>
<div class="abs" style="left:1130.8px;top:103.9px;width:2px;height:2px;background:#3b3b3b;border-radius:1px;"></div>
<div class="abs" style="left:1135.1px;top:103.9px;width:2px;height:2px;background:#3b3b3b;border-radius:1px;"></div>
<svg style="left:1808px;top:98px;" width="14" height="14" viewBox="0 0 14 14"><rect x="3.700" y="0.600" width="6.600" height="10.400" rx="1.300" fill="none" stroke="#3b3b3b" stroke-width="1.100"/><path d="M5.600 3.500h2.800M5.600 7h2.800M5.600 9.300h2.800" stroke="#3b3b3b" stroke-width="1"/><path d="M3.700 9.800L0.700 13.400h12.600L10.300 9.800" fill="none" stroke="#3b3b3b" stroke-width="1.100" stroke-linejoin="round"/></svg>
<div class="t" style="left:1830.0px;top:98.90px;font-size:13px;color:#3b3b3b;letter-spacing:-0.248px;">Python 3.14.0</div>

<svg style="left:10px;top:1013px;" width="13" height="16" viewBox="0 0 13 16"><path d="M1 5.800l4.400 4.300L1 14.400M11 1.400L6.600 5.700 11 10" fill="none" stroke="#3b3b3b" stroke-width="1.100"/></svg>
<svg style="left:41px;top:1013.8px;" width="14" height="14" viewBox="0 0 14 14"><circle cx="7" cy="7" r="6.400" fill="none" stroke="#3b3b3b" stroke-width="1.100"/><path d="M4 4l6 6M10 4l-6 6" stroke="#3b3b3b" stroke-width="1.100"/></svg>
<div class="t" style="left:60.0px;top:1015.54px;font-size:12px;color:#3b3b3b;">1</div>
<svg style="left:70px;top:1013.3px;" width="14" height="13.5" viewBox="0 0 14 13.500"><path d="M7 1.200L13.200 12.600H0.800z" fill="none" stroke="#3b3b3b" stroke-width="1.100" stroke-linejoin="round"/><path d="M7 5v4M7 10v1.300" stroke="#3b3b3b" stroke-width="1.100"/></svg>
<div class="t" style="left:88.5px;top:1015.54px;font-size:12px;color:#3b3b3b;">0</div>
<div class="t" style="left:1698.3px;top:1015.84px;font-size:12px;color:#3b3b3b;letter-spacing:-0.541px;">Spaces: 4</div>
<div class="t" style="left:1765.0px;top:1015.84px;font-size:12px;color:#3b3b3b;letter-spacing:0.550px;">{ }</div>
<svg style="left:1794px;top:1013.5px;" width="18" height="15" viewBox="0 0 18 15"><circle cx="6" cy="4.400" r="3.100" fill="none" stroke="#262626" stroke-width="1.600"/><circle cx="12" cy="4.400" r="3.100" fill="none" stroke="#262626" stroke-width="1.600"/><path d="M3 6.200C0.700 7.800 0.600 10.300 1.300 11.200C3.300 13.300 6.400 14.200 9 14.200S14.700 13.300 16.700 11.200C17.400 10.300 17.300 7.800 15 6.200" fill="none" stroke="#262626" stroke-width="1.600" stroke-linecap="round"/><path d="M7.200 9.600v2M10.800 9.600v2" stroke="#262626" stroke-width="1.500" stroke-linecap="round"/></svg>
<div class="t" style="left:1827.0px;top:1015.84px;font-size:12px;color:#3b3b3b;letter-spacing:-0.094px;">Cell 7 of 7</div>
<svg style="left:1898px;top:1013.8px;" width="12" height="14.5" viewBox="0 0 12 14"><path d="M6 1a4 4 0 0 0-4 4v3.400L0.800 10.600h10.400L10 8.400V5a4 4 0 0 0-4-4zM4.600 11a1.400 1.400 0 0 0 2.800 0" fill="none" stroke="#3b3b3b" stroke-width="1.100" stroke-linejoin="round"/></svg>

</body>
</html>
